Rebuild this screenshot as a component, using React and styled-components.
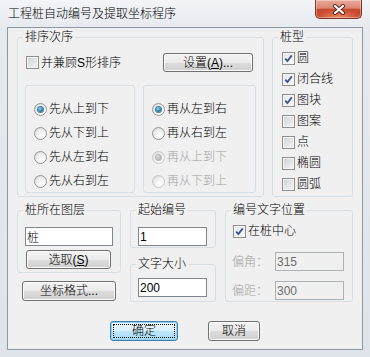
import React from "react";
import styled, {createGlobalStyle} from "styled-components";

const FONT = `"Liberation Sans", "Noto Sans CJK SC", sans-serif`;

const GlobalStyle = createGlobalStyle`
  html, body {
    margin: 0;
    padding: 0;
  }

  body {
    font-family: ${FONT};
    font-size: 12px;
    font-weight: 300;
    color: #000;
  }
`;

// 排序选项
const firstOrder = [
    {label: "先从上到下", checked: true},
    {label: "先从下到上"},
    {label: "先从左到右"},
    {label: "先从右到左"},
];

const secondOrder = [
    {label: "再从左到右", checked: true},
    {label: "再从右到左"},
    {label: "再从上到下", checked: true, disabled: true},
    {label: "再从下到上", disabled: true},
];

// 桩型
const pileTypes = [
    {label: "圆", checked: true},
    {label: "闭合线", checked: true},
    {label: "图块", checked: true},
    {label: "图案"},
    {label: "点"},
    {label: "椭圆"},
    {label: "圆弧"},
];

function CheckMark() {
    return (
        <svg width="9" height="9" viewBox="0 0 9 9">
            <path d="M1.2 4.6 L3.4 7 L7.8 1.4" fill="none" stroke="#3f5a8e" strokeWidth="1.9"/>
        </svg>
    );
}

function Check({checked, disabled, children}) {
    return (
        <Option $disabled={disabled}>
            <Box $checked={checked}>{checked && <CheckMark/>}</Box>
            <span>{children}</span>
        </Option>
    );
}

function Radio({checked, disabled, children}) {
    return (
        <Option $disabled={disabled}>
            <Dot $checked={checked} $disabled={disabled}/>
            <span>{children}</span>
        </Option>
    );
}

export default function App() {
    return (
        <>
            <GlobalStyle/>
            <Window>
                <TitleBar>
                    <Caption>工程桩自动编号及提取坐标程序</Caption>
                    <CloseButton aria-label="关闭">
                        <svg width="14" height="11" viewBox="0 0 14 11">
                            <path d="M3 2 L11 9 M11 2 L3 9" stroke="#5a2418" strokeWidth="4" strokeLinecap="round"/>
                            <path d="M3 2 L11 9 M11 2 L3 9" stroke="#fff" strokeWidth="2.2" strokeLinecap="round"/>
                        </svg>
                    </CloseButton>
                </TitleBar>

                <Client>
                    {/*上半部分*/}
                    <TopRow>
                        <Group $w={247}>
                            <Legend>排序次序</Legend>
                            <SortBody>
                                <SortHead>
                                    <Check>并兼顾S形排序</Check>
                                    <Button $w={90}>设置(<u>A</u>)...</Button>
                                </SortHead>
                                <Panes>
                                    <Pane $w={110}>
                                        {firstOrder.map((item, i) => (
                                            <Radio key={i} checked={item.checked}>{item.label}</Radio>
                                        ))}
                                    </Pane>
                                    <Pane $w={113}>
                                        {secondOrder.map((item, i) => (
                                            <Radio key={i} checked={item.checked} disabled={item.disabled}>
                                                {item.label}
                                            </Radio>
                                        ))}
                                    </Pane>
                                </Panes>
                            </SortBody>
                        </Group>

                        <Group $w={81}>
                            <Legend>桩型</Legend>
                            <TypeList>
                                {pileTypes.map((item, i) => (
                                    <Check key={i} checked={item.checked}>{item.label}</Check>
                                ))}
                            </TypeList>
                        </Group>
                    </TopRow>

                    {/*下半部分*/}
                    <BottomRow>
                        <Column $w={104}>
                            <Group>
                                <Legend>桩所在图层</Legend>
                                <LayerBody>
                                    <Field readOnly defaultValue="桩" $w={88}/>
                                    <Button $w={85}>选取(<u>S</u>)</Button>
                                </LayerBody>
                            </Group>
                            <FormatButton $w={94} $h={20}>坐标格式...</FormatButton>
                        </Column>

                        <Column $w={86} $gap={9}>
                            <Group>
                                <Legend>起始编号</Legend>
                                <NumberBody $top={10} $bottom={1}>
                                    <Field readOnly defaultValue="1" $w={69}/>
                                </NumberBody>
                            </Group>
                            <Group>
                                <Legend>文字大小</Legend>
                                <NumberBody $top={7} $bottom={4}>
                                    <Field readOnly defaultValue="200" $w={69}/>
                                </NumberBody>
                            </Group>
                        </Column>

                        <Group $w={128}>
                            <Legend>编号文字位置</Legend>
                            <PlaceBody>
                                <Check checked>在桩中心</Check>
                                <OffsetRow>
                                    <OffsetLabel>偏角：</OffsetLabel>
                                    <Field readOnly disabled defaultValue="315" $w={69} $disabled/>
                                </OffsetRow>
                                <OffsetRow>
                                    <OffsetLabel>偏距：</OffsetLabel>
                                    <Field readOnly disabled defaultValue="300" $w={69} $disabled/>
                                </OffsetRow>
                            </PlaceBody>
                        </Group>
                    </BottomRow>

                    <Actions>
                        <Button $w={68} $h={20} $primary>确定</Button>
                        <Button $w={52} $h={20}>取消</Button>
                    </Actions>
                </Client>
            </Window>
        </>
    );
}

const Window = styled.div`
  width: 370px;
  height: 357px;
  box-sizing: border-box;
  padding: 0 7px 7px;
  display: flex;
  flex-direction: column;
  background: linear-gradient(180deg, #f3f5f8 0, #e6eaef 27px, #dfe4ea 100%);
`;

const TitleBar = styled.div`
  height: 27px;
  display: flex;
  align-items: flex-start;
  justify-content: space-between;
`;

const Caption = styled.div`
  align-self: center;
  padding-left: 1px;
  font-size: 12px;
  line-height: 14px;
  color: #000;
`;

const CloseButton = styled.div`
  width: 47px;
  height: 19px;
  margin-right: 1px;
  box-sizing: border-box;
  border: 1px solid #7b3426;
  border-top: none;
  border-radius: 0 0 5px 5px;
  display: flex;
  align-items: center;
  justify-content: center;
  background: radial-gradient(ellipse 60% 50% at 50% 100%, #f08a60 0%, rgba(240, 138, 96, 0) 100%),
  linear-gradient(180deg, #e9ab9c 0%, #dc8673 45%, #c84b31 52%, #bf3a20 100%);
  box-shadow: inset 0 0 0 1px rgba(255, 255, 255, 0.35);
`;

const Client = styled.div`
  flex: 1;
  border: 1px solid #8e98a3;
  background: #f0f0f0;
  padding: 2px 9px 8px;
  display: flex;
  flex-direction: column;
`;

const TopRow = styled.div`
  display: flex;
  gap: 8px;
`;

const BottomRow = styled.div`
  display: flex;
  gap: 9px;
  margin-top: 6px;
`;

const Group = styled.fieldset`
  margin: 0;
  padding: 0;
  min-width: 0;
  box-sizing: border-box;
  border: 1px solid #d5dfe5;
  border-radius: 3px;
  width: ${p => p.$w ? `${p.$w}px` : "auto"};
`;

const Legend = styled.legend`
  margin-left: 5px;
  padding: 0 2px;
  font-size: 12px;
  line-height: 14px;
  color: #000;
`;

const SortBody = styled.div`
  padding: 9px 7px 3px;
`;

const SortHead = styled.div`
  height: 19px;
  padding: 0 3px 0 1px;
  display: flex;
  align-items: center;
  justify-content: space-between;
`;

const Panes = styled.div`
  display: flex;
  gap: 8px;
  margin-top: 13px;
`;

const Pane = styled.div`
  width: ${p => p.$w}px;
  box-sizing: border-box;
  border: 1px solid #d5dfe5;
  border-radius: 3px;
  padding: 15px 0 3px 8px;
  display: flex;
  flex-direction: column;
  gap: 8px;
`;

const TypeList = styled.div`
  padding: 6px 0 0 9px;
  display: flex;
  flex-direction: column;
  gap: 5px;
`;

const Option = styled.label`
  height: 16px;
  display: flex;
  align-items: center;
  gap: 2px;
  font-size: 12px;
  line-height: 16px;
  white-space: nowrap;
  color: ${p => p.$disabled ? "#a3a3a3" : "#000"};
`;

const Box = styled.span`
  width: 13px;
  height: 13px;
  flex: none;
  box-sizing: border-box;
  border: 1px solid #8e8f8f;
  display: flex;
  align-items: center;
  justify-content: center;
  background: ${p => p.$checked
          ? "linear-gradient(135deg, #e4e6ea 0%, #fbfbfb 100%)"
          : "linear-gradient(135deg, #cfd2d6 0%, #f4f4f4 100%)"};
  box-shadow: inset 0 0 0 1px #f6f6f6;
`;

const Dot = styled.span`
  width: 13px;
  height: 13px;
  flex: none;
  box-sizing: border-box;
  border-radius: 50%;
  border: 1px solid ${p => p.$disabled ? "#c9c9c9" : "#969696"};
  background: radial-gradient(circle at 65% 70%, #ffffff 0%, #f2f2f2 45%, #d2d2d2 100%);
  display: flex;
  align-items: center;
  justify-content: center;

  &::after {
    content: '';
    display: ${p => p.$checked ? "block" : "none"};
    width: 5px;
    height: 5px;
    border-radius: 50%;
    background: ${p => p.$disabled
            ? "radial-gradient(circle at 40% 35%, #e0e0e0, #9a9a9a)"
            : "radial-gradient(circle at 40% 35%, #8fdcff 0%, #2a7fb0 55%, #0f3f60 100%)"};
    box-shadow: 0 0 0 1px ${p => p.$disabled ? "#b8b8b8" : "#4b7c9c"};
  }
`;

const Button = styled.button`
  width: ${p => p.$w}px;
  height: ${p => p.$h || 19}px;
  box-sizing: border-box;
  padding: 0;
  position: relative;
  flex: none;
  font-family: ${FONT};
  font-size: 12px;
  font-weight: 300;
  line-height: 14px;
  color: #000;
  border-radius: 3px;
  border: 1px solid ${p => p.$primary ? "#3c7fb1" : "#707070"};
  background: ${p => p.$primary
          ? "linear-gradient(180deg, #eaf6fd 0%, #d9f0fc 50%, #bee6fd 51%, #a7d9f5 100%)"
          : "linear-gradient(180deg, #f2f2f2 0%, #ebebeb 50%, #dddddd 51%, #cfcfcf 100%)"};
  box-shadow: inset 0 0 0 1px ${p => p.$primary ? "#98d1ef" : "#fcfcfc"};

  u {
    text-decoration: underline;
  }

  // 默认按钮的焦点虚线框
  &::after {
    content: '';
    display: ${p => p.$primary ? "block" : "none"};
    position: absolute;
    inset: 2px;
    border: 1px dotted #000;
    border-radius: 1px;
  }
`;

const FormatButton = styled(Button)`
  margin-left: 5px;
`;

const Field = styled.input`
  width: ${p => p.$w}px;
  height: 19px;
  box-sizing: border-box;
  margin: 0;
  padding: 0 1px;
  font-family: ${FONT};
  font-size: 12px;
  font-weight: 300;
  line-height: 17px;
  outline: none;
  border: 1px solid ${p => p.$disabled ? "#adb2b5" : "#7f8790"};
  background: ${p => p.$disabled ? "#f0f0f0" : "#fff"};
  color: ${p => p.$disabled ? "#6d6d6d" : "#000"};
  -webkit-text-fill-color: ${p => p.$disabled ? "#6d6d6d" : "#000"};
  opacity: 1;
`;

const Column = styled.div`
  width: ${p => p.$w}px;
  display: flex;
  flex-direction: column;
  gap: ${p => p.$gap || 8}px;
`;

const LayerBody = styled.div`
  padding: 10px 7px 3px;
  display: flex;
  flex-direction: column;
  align-items: flex-start;
  gap: 4px;

  button {
    margin-left: 1px;
  }
`;

const NumberBody = styled.div`
  padding: ${p => p.$top}px 8px ${p => p.$bottom}px 7px;
`;

const PlaceBody = styled.div`
  padding: 6px 8px 1px 6px;
  display: flex;
  flex-direction: column;

  > label {
    margin-left: 1px;
    margin-bottom: 13px;
  }
`;

const OffsetRow = styled.div`
  display: grid;
  grid-template-columns: 43px 69px;
  align-items: center;

  & + & {
    margin-top: 10px;
  }
`;

const OffsetLabel = styled.span`
  font-size: 12px;
  line-height: 14px;
  color: #a3a3a3;
`;

const Actions = styled.div`
  display: flex;
  justify-content: center;
  gap: 30px;
  margin-top: 19px;
`;
